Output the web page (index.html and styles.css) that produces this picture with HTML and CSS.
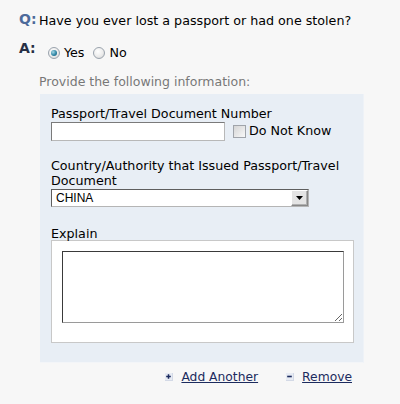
FILE: index.html
```html
<!DOCTYPE html>
<html>
<head>
<meta charset="utf-8">
<link rel="stylesheet" href="styles.css">
</head>
<body>
<div class="page">
  <div class="row q-row">
    <span class="tag tag-q">Q:</span>
    <span class="question">Have you ever lost a passport or had one stolen?</span>
  </div>
  <div class="row a-row">
    <span class="tag tag-a">A:</span>
    <div class="choices">
      <label class="choice"><span class="radio checked"></span>Yes</label>
      <label class="choice"><span class="radio"></span>No</label>
    </div>
  </div>
  <div class="hint">Provide the following information:</div>
  <div class="panel">
    <div class="field">
      <div class="label">Passport/Travel Document Number</div>
      <div class="inline">
        <input class="text" type="text">
        <label class="check"><span class="box"></span>Do Not Know</label>
      </div>
    </div>
    <div class="field field-country">
      <div class="label">Country/Authority that Issued Passport/Travel Document</div>
      <div class="select"><span class="select-value">CHINA</span><span class="select-btn"><svg width="7" height="4" viewBox="0 0 7 4"><path d="M0 0H7L3.5 4Z" fill="#000"/></svg></span></div>
    </div>
    <div class="field field-explain">
      <div class="label label-explain">Explain</div>
      <div class="explain-box"><textarea class="area"></textarea></div>
    </div>
  </div>
  <div class="actions">
    <a class="action" href="#"><span class="icon"><svg width="8" height="8" viewBox="0 0 8 8"><rect x="0" y="0" width="8" height="8" fill="#d3d9e6"/><rect x="0" y="0" width="7" height="7" fill="#e7ebf3"/><path d="M1.2 3.5H5.8M3.5 1.2V5.8" stroke="#1c2b5e" stroke-width="1.5"/></svg></span><span class="link">Add Another</span></a>
    <a class="action" href="#"><span class="icon"><svg width="8" height="8" viewBox="0 0 8 8"><rect x="0" y="0" width="8" height="8" fill="#d3d9e6"/><rect x="0" y="0" width="7" height="7" fill="#e7ebf3"/><path d="M1.2 3.5H5.8" stroke="#1c2b5e" stroke-width="1.6"/></svg></span><span class="link">Remove</span></a>
  </div>
</div>
</body>
</html>
```
FILE: styles.css
```css
* { box-sizing: border-box; }
html, body { margin: 0; padding: 0; }
body {
  background: #f7f7f7;
  font-family: "DejaVu Sans", Verdana, sans-serif;
  font-size: 12.7px;
  color: #000;
  width: 400px;
  height: 404px;
  overflow: hidden;
}
.page { padding: 10px 0 0 19px; }
.row { display: flex; align-items: flex-start; }
.tag { width: 20px; font-weight: bold; font-size: 14px; line-height: 18px; }
.tag-q { color: #4d6a9a; }
.tag-a { color: #262f45; }
.question { line-height: 16px; padding-top: 3px; }
.a-row { margin-top: 10px; }
.choices { display: flex; gap: 9px; padding-left: 9px; padding-top: 7px; }
.choice { display: flex; align-items: center; gap: 4px; line-height: 14px; }
.radio {
  width: 12px; height: 12px; border-radius: 50%;
  border: 1px solid #9aa3ad;
  background: radial-gradient(circle at 40% 35%, #ffffff 0%, #ececec 55%, #cfcfcf 100%);
  position: relative;
}
.radio.checked::after {
  content: ""; position: absolute; left: 2px; top: 2px; width: 6px; height: 6px; border-radius: 50%;
  background: radial-gradient(circle at 35% 35%, #a6d8e6 0%, #2f86a5 55%, #1c5a78 100%);
}
.hint { color: #777; font-size: 12.5px; margin: 15px 0 0 20px; line-height: 14px; }
.panel {
  margin: 5px 0 0 21px;
  width: 324px;
  background: #e8eef5;
  border-right: 1px solid #eef2f7;
  border-bottom: 1px solid #f3f5f8;
  padding: 12px 10px 19px 11px;
}
.label { line-height: 15px; }
.inline { display: flex; align-items: flex-start; margin-top: 1px; }
.text {
  width: 174px; height: 19px; margin: 0; padding: 0;
  border: 1px solid #7a7a7a; border-right-color: #b8b8b8; border-bottom-color: #b8b8b8;
  background: #fff;
}
.check { display: flex; align-items: center; gap: 3px; margin-left: 8px; line-height: 14px; margin-top: 2px; }
.box {
  width: 13px; height: 13px; border: 1px solid #a0a4aa;
  background: linear-gradient(135deg, #d5d5d5, #f8f8f8);
}
.field-country { margin-top: 17px; }
.select {
  margin-top: 1px; width: 258px; height: 18px; background: #fff;
  border: 1px solid #5e5e5e; border-right-color: #b5b5b5; border-bottom-color: #b5b5b5;
  display: flex; align-items: center; justify-content: space-between;
  font-family: "Liberation Sans", Arial, sans-serif; font-size: 12px;
}
.select-value { padding-left: 4px; }
.select-btn {
  width: 17px; height: 16px; background: #e4e4e4;
  border: 1px solid #888; border-top-color: #fff; border-left-color: #fff;
  box-shadow: inset -1px -1px 0 #b0b0b0;
  display: flex; align-items: center; justify-content: center;
}
.field-explain { margin-top: 20px; }
.label-explain { line-height: 13px; }
.explain-box {
  width: 303px; height: 103px; background: #fff;
  border: 1px solid #c8c8c8; padding: 10px;
}
.area {
  display: block; width: 282px; height: 72px; margin: 0; padding: 2px;
  border: 1px solid #3a3a3a; border-right-color: #9a9a9a; border-bottom-color: #9a9a9a;
  background: #fff; resize: both;
}
.actions { display: flex; justify-content: flex-end; gap: 28px; width: 333px; margin-top: 6px; font-size: 12.3px; }
.action { display: flex; align-items: center; gap: 8px; text-decoration: none; }
.icon { display: flex; }
.link { color: #1c2b5e; text-decoration: underline; line-height: 16px; }
```
